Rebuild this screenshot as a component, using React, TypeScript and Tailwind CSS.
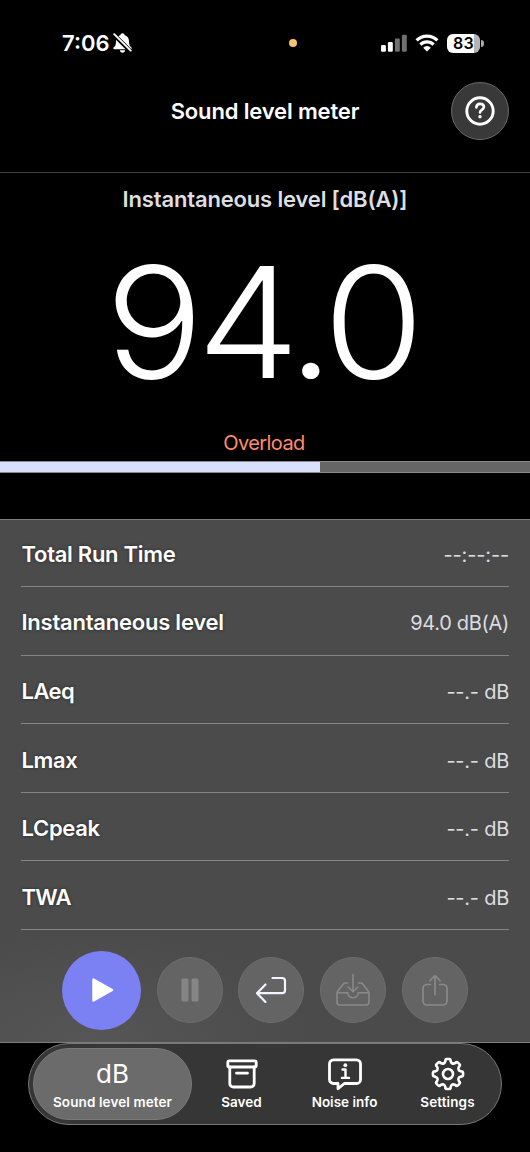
import React from 'react';

const readings = [
  { label: 'Total Run Time', value: '--:--:--', labelClass: 'tracking-[-0.28px]', valueClass: 'tracking-[-0.15px]' },
  { label: 'Instantaneous level', value: '94.0 dB(A)', labelClass: 'tracking-[-0.23px]', valueClass: 'tracking-[-0.3px]' },
  { label: 'LAeq', value: '--.- dB', labelClass: 'tracking-[-0.5px]', valueClass: 'tracking-[-0.25px]' },
  { label: 'Lmax', value: '--.- dB', labelClass: 'tracking-[-0.4px]', valueClass: 'tracking-[-0.25px]' },
  { label: 'LCpeak', value: '--.- dB', labelClass: 'tracking-[-0.3px]', valueClass: 'tracking-[-0.25px]' },
  { label: 'TWA', value: '--.- dB', labelClass: 'tracking-[-0.7px]', valueClass: 'tracking-[-0.25px]' },
];

// closed outline of an eight-tooth gear centred on 0,0
const gearPath = (() => {
  const at = (angle: number, r: number) =>
    `${(Math.cos(angle) * r).toFixed(2)} ${(Math.sin(angle) * r).toFixed(2)}`;
  let d = '';
  for (let i = 0; i < 8; i++) {
    const mid = (i * Math.PI) / 4 - Math.PI / 2;
    d += `${i === 0 ? 'M' : 'L'}${at(mid - 0.2, 13.2)}`;
    d += `Q${at(mid - 0.18, 15.1)} ${at(mid - 0.09, 15.1)}L${at(mid + 0.09, 15.1)}`;
    d += `Q${at(mid + 0.18, 15.1)} ${at(mid + 0.2, 13.2)}`;
    d += `Q${at(mid + 0.393, 9.8)} ${at(mid + 0.585, 13.2)}`;
  }
  return `${d}Z`;
})();

const StatusBar = () => (
  <div className="flex h-[86px] items-center pl-[62px] pr-[46px]">
    <span className="w-[51px] text-[22px] font-semibold leading-none">7:06</span>
    <svg width="20" height="22" viewBox="0 0 20 22" fill="white">
      <path d="M9.500 1.200c1.400 0 2 .8 2 1.800 2.800.9 4.500 3 4.500 6.200 0 3.600.8 4.800 2.400 6.300.6.700.3 1.800-.8 1.800H1.400c-1.100 0-1.400-1.100-.8-1.800C2.200 14 3 12.800 3 9.200 3 6 4.700 3.900 7.500 3c0-1 .6-1.800 2-1.800z" />
      <path d="M6.800 18.300h5.400c-.2 1.500-1.300 2.500-2.700 2.500s-2.500-1-2.700-2.500z" />
      <path d="M0 1.800 18 19.800" stroke="black" strokeWidth="4.200" />
      <path d="M1.200 2.200 17.700 18.700" stroke="white" strokeWidth="1.900" strokeLinecap="round" />
    </svg>
    <div className="ml-[156px] size-2 rounded-full bg-[#f7c46e]" />
    <div className="ml-auto flex items-center">
      <svg width="27" height="18" viewBox="0 0 27 18">
        <rect x="0" y="11" width="4.900" height="6.800" rx="1.300" fill="white" />
        <rect x="6.900" y="8" width="4.900" height="9.800" rx="1.300" fill="white" />
        <rect x="13.900" y="4.400" width="4.900" height="13.400" rx="1.300" fill="#707070" />
        <rect x="20.900" y="0.800" width="4.900" height="17" rx="1.300" fill="#707070" />
      </svg>
      <svg className="ml-[7px]" width="24" height="18" viewBox="0 0 24 18" fill="none" stroke="white" strokeWidth="3.200">
        <path d="M1.600 6.400a14.600 14.600 0 0 1 20.800 0" />
        <path d="M5.400 10.700a9.200 9.200 0 0 1 13.200 0" />
        <path d="M12 17.500 8.200 13.700a5.300 5.300 0 0 1 7.600 0z" fill="white" stroke="none" />
      </svg>
      <div className="ml-[8px] flex h-[19px] w-[33px] items-center justify-center rounded-[6px] bg-[linear-gradient(90deg,white_83%,#b4b4b8_83%)] text-[16px] font-semibold tracking-[0.2px] text-black">
        83
      </div>
      <div className="ml-px h-[7px] w-[3px] rounded-r-full bg-[#a9a9ad]" />
    </div>
  </div>
);

const Header = () => (
  <header className="grid h-[87px] grid-cols-[1fr_auto_1fr] items-start border-b-[1.500px] border-[#3f3f3f]">
    <span />
    <h1 className="mt-[10px] text-[22px] font-semibold leading-[30px] tracking-[-0.150px]">Sound level meter</h1>
    <button className="-mt-[4px] mr-[21px] flex size-[58px] items-center justify-center justify-self-end rounded-full border border-[#696969] bg-[#393939]">
      <svg width="30" height="30" viewBox="0 0 30 30" fill="none" stroke="white" strokeLinecap="round">
        <circle cx="15" cy="15" r="13.200" strokeWidth="2.900" />
        <path d="M11.300 11.400c.2-2.300 1.700-3.500 3.800-3.500 2.200 0 3.800 1.300 3.800 3.200 0 2.700-3.900 2.900-3.900 5.300" strokeWidth="2.600" />
        <circle cx="15" cy="20.800" r="1.700" fill="white" stroke="none" />
      </svg>
    </button>
  </header>
);

const Level = () => (
  <section className="flex h-[346px] flex-col items-center">
    <h2 className="mt-[11px] text-[22px] font-semibold leading-[30px] tracking-[-0.160px] text-[#dedee0]">
      Instantaneous level [dB(A)]
    </h2>
    <div className="mt-[14px] mr-[7px] h-[188px] scale-x-[1.06] text-[154px] font-light leading-[188px] tracking-[-6px] [font-optical-sizing:none]">
      94.0
    </div>
    <p className="mt-[14px] mr-[2px] h-[26px] text-[20px] leading-[26px] tracking-[-0.600px] text-[#ff8c6c]">Overload</p>
    <div className="mt-[5px] h-[12px] w-full border-y border-[#8b8b8d] bg-[#666]">
      <div className="h-full bg-[#d9e0fb]" style={{ width: `${(320 / 530) * 100}%` }} />
    </div>
  </section>
);

const Readings = () => (
  <section className="h-[524px] border-y-[1.500px] border-[#7c7c7e] bg-[#4b4b4b] bg-[radial-gradient(ellipse_220px_110px_at_90px_100%,#565656,#4b4b4b00)]">
    <div className="-mt-[1.500px] px-[21px]">
      {readings.map((row) => (
        <div key={row.label} className="flex h-[68.600px] items-center justify-between border-b border-[#858585] pt-[4px]">
          <span className={`pl-[0.500px] text-[22px] font-semibold [text-shadow:0_0_3px_#222] ${row.labelClass}`}>{row.label}</span>
          <span className={`pt-px text-[20px] text-[#dcdce0] ${row.valueClass}`}>{row.value}</span>
        </div>
      ))}
    </div>
    <Controls />
  </section>
);

const Controls = () => (
  <div className="mt-[20px] flex h-[80px] items-center gap-[15.700px] pl-[62px]">
    <button className="flex size-[79px] items-center justify-center rounded-full bg-[#7b80f2]">
      <svg width="24" height="26" viewBox="0 0 24 26" fill="white" stroke="white" strokeWidth="2.500" strokeLinejoin="round">
        <path d="M3.500 2.500v21L22 13z" />
      </svg>
    </button>
    <button className="flex size-[66px] items-center justify-center rounded-full border border-[#6d6d6d] bg-[#646464]">
      <svg width="18" height="24" viewBox="0 0 18 24" fill="#858585">
        <rect x="0.500" y="0.500" width="7" height="23" rx="1.500" />
        <rect x="10.500" y="0.500" width="7" height="23" rx="1.500" />
      </svg>
    </button>
    <button className="flex size-[66px] items-center justify-center rounded-full border border-[#6d6d6d] bg-[#646464]">
      <svg width="32" height="28" viewBox="0 0 32 28" fill="none" stroke="#f3f4ff" strokeWidth="2.200" strokeLinecap="round" strokeLinejoin="round">
        <path d="M17.500 2H27a3 3 0 0 1 3 3v9.200a3 3 0 0 1-3 3H2.500" />
        <path d="M10.500 8.500 2 17.200l8.500 8.700" />
      </svg>
    </button>
    <button className="flex size-[66px] items-center justify-center rounded-full border border-[#6d6d6d] bg-[#646464]">
      <svg width="34" height="34" viewBox="0 0 34 34" fill="none" stroke="#898989" strokeWidth="1.600" strokeLinecap="round" strokeLinejoin="round">
        <path d="M11.500 10H9.300c-1 0-1.500.3-2 1L1.500 18.500c-.4.500-.5 1-.5 1.600V29a3 3 0 0 0 3 3h26a3 3 0 0 0 3-3v-8.900c0-.6-.1-1.100-.5-1.600L26.700 11c-.5-.7-1-1-2-1h-2.200" />
        <path d="M1.500 19.700h10.300c0 3 2.200 5 5.200 5s5.200-2 5.200-5h10.300M17 1.500v17M12.200 14l4.800 4.700 4.800-4.700" />
      </svg>
    </button>
    <button className="flex size-[66px] items-center justify-center rounded-full border border-[#6d6d6d] bg-[#646464]">
      <svg width="28" height="34" viewBox="0 0 28 34" fill="none" stroke="#898989" strokeWidth="1.700" strokeLinecap="round" strokeLinejoin="round">
        <path d="M9.500 11.500H6a4 4 0 0 0-4 4V28a4 4 0 0 0 4 4h16a4 4 0 0 0 4-4V15.500a4 4 0 0 0-4-4h-3.500" />
        <path d="M14 21.500V3M9 7.700 14 2.500l5 5.200" />
      </svg>
    </button>
  </div>
);

const TabBar = () => (
  <nav className="ml-[28px] flex h-[82px] w-[474px] rounded-full border border-[#777] bg-[#363636] p-[4px] text-[13.500px] font-semibold leading-[18px]">
    <button className="flex h-[72px] w-[159px] shrink-0 flex-col items-center rounded-full border border-[#7a7a7a] bg-[#6b6b6b]">
      <span className="mt-[8px] h-[34px] text-[26px] font-normal leading-[34px]">dB</span>
      <span className="mt-[2px] whitespace-nowrap tracking-[0.100px]">Sound level meter</span>
    </button>
    <button className="-ml-[2px] flex w-[103px] shrink-0 flex-col items-center">
      <svg className="mt-[9px]" width="34" height="34" viewBox="0 0 34 34" fill="none" stroke="white" strokeWidth="2.800" strokeLinecap="round" strokeLinejoin="round">
        <rect x="2.800" y="3.800" width="28.400" height="6.200" rx="1.500" />
        <path d="M4.800 10v16.500a3.500 3.500 0 0 0 3.500 3.500h17.400a3.500 3.500 0 0 0 3.500-3.500V10M11.500 16.200h11" />
      </svg>
      <span className="mt-[2px]">Saved</span>
    </button>
    <button className="flex w-[103px] shrink-0 flex-col items-center">
      <svg className="mt-[9px]" width="36" height="34" viewBox="0 0 36 34" fill="none" stroke="white" strokeWidth="2.800" strokeLinecap="round" strokeLinejoin="round">
        <path d="M6.500 2.800h23a4 4 0 0 1 4 4v15.700a4 4 0 0 1-4 4H17.300L11 31.800v-5.300H6.500a4 4 0 0 1-4-4V6.800a4 4 0 0 1 4-4z" />
        <path d="M15.500 12.500h3v8.300M15 20.900h7" strokeWidth="2.400" />
        <circle cx="18.300" cy="8.200" r="1.900" fill="white" stroke="none" />
      </svg>
      <span className="mt-[2px] whitespace-nowrap">Noise info</span>
    </button>
    <button className="flex w-[103px] shrink-0 flex-col items-center">
      <svg className="mt-[9px]" width="34" height="34" viewBox="-17 -17 34 34" fill="none" stroke="white" strokeWidth="2.600" strokeLinejoin="round">
        <path d={gearPath} />
        <circle r="5" />
      </svg>
      <span className="mt-[2px] tracking-[0.100px]">Settings</span>
    </button>
  </nav>
);

const App = () => {
  return (
    <main className="h-[1152px] w-[530px] overflow-hidden bg-black font-[Inter,sans-serif] text-white">
      <StatusBar />
      <Header />
      <Level />
      <Readings />
      <TabBar />
    </main>
  );
};

export default App;
